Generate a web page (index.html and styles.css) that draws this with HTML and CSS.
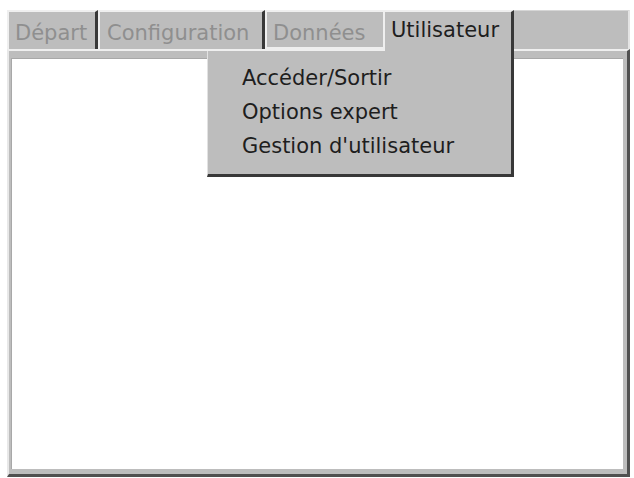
FILE: index.html
```html
<!DOCTYPE html>
<html lang="fr">
<head>
    <meta charset="UTF-8">
    <title>Utilisateur</title>
    <link rel="stylesheet" href="styles.css">
</head>
<body>
    <div class="window">
        <div class="tabs">
            <div class="tab tab-depart">Départ</div>
            <div class="tab tab-config">Configuration</div>
            <div class="tab tab-raised">Données</div>
            <div class="tab tab-active">Utilisateur</div>
            <div class="tab-fill"></div>
        </div>
        <div class="frame">
            <div class="panel"></div>
        </div>
        <div class="menu">
            <div class="menu-item">Accéder/Sortir</div>
            <div class="menu-item">Options expert</div>
            <div class="menu-item">Gestion d'utilisateur</div>
        </div>
    </div>
</body>
</html>
```
FILE: styles.css
```css
body {
    margin: 0;
    background-color: white;
    font-family: "DejaVu Sans", sans-serif;
    font-size: 21px;
}
.window {
    position: relative;
    width: 623px;
    margin: 10px 0 0 7px;
}

/* Tab strip */
.tabs {
    display: flex;
    align-items: flex-start;
    height: 39px;
}
.tab {
    box-sizing: border-box;
    height: 39px;
    padding: 9px 0 0 6px;
    line-height: 24px;
    background-color: #bdbdbd;
    color: #8f8f8f;
    border-top: 2px solid #efefef;
    border-left: 2px solid #efefef;
    border-right: 3px solid #383838;
    white-space: nowrap;
}
.tab-depart { width: 91px; }
.tab-config { width: 167px; padding-left: 7px; }
.tab-raised {
    width: 120px;
    border: 2px solid #efefef;
}
.tab-active {
    position: relative;
    z-index: 1;
    width: 129px;
    height: 41px;
    padding-top: 6px;
    border-left: none;
    color: #1e1e1e;
}
.tab-fill {
    box-sizing: border-box;
    width: 116px;
    height: 39px;
    background-color: #bdbdbd;
    border-top: 1px solid #d6d6d6;
    border-right: 2px solid #e4e4e4;
}

/* Frame under the tabs */
.frame {
    box-sizing: border-box;
    height: 428px;
    padding: 7px 4px 5px 2px;
    background-color: #bdbdbd;
    border-top: 2px solid #efefef;
    border-left: 2px solid #e8e8e8;
    border-right: 3px solid #505050;
    border-bottom: 3px solid #505050;
}
.panel {
    box-sizing: border-box;
    height: 100%;
    background-color: white;
    border-top: 1px solid #a8a8a8;
    border-left: 1px solid #a8a8a8;
}

/* Dropdown of the active tab */
.menu {
    position: absolute;
    z-index: 2;
    left: 200px;
    top: 41px;
    box-sizing: border-box;
    width: 307px;
    height: 126px;
    padding: 10px 0 0 34px;
    background-color: #bdbdbd;
    border-left: 1px solid #e2e2e2;
    border-right: 3px solid #383838;
    border-bottom: 3px solid #383838;
    color: #1e1e1e;
}
.menu-item {
    line-height: 34px;
    white-space: nowrap;
}
```
